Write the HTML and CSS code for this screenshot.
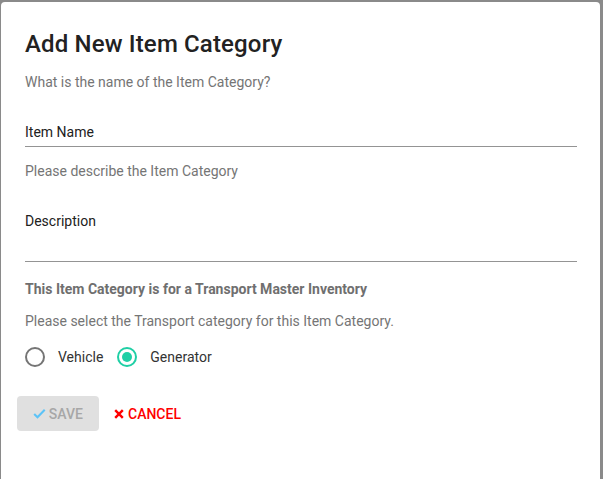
FILE: index.html
```html
<!DOCTYPE html>
<html>
<head>
<meta charset="utf-8">
<link rel="stylesheet" href="styles.css">
</head>
<body>
<div class="dialog">
  <h1 class="title">Add New Item Category</h1>
  <p class="hint hint-first">What is the name of the Item Category?</p>
  <div class="field">
    <div class="label">Item Name</div>
  </div>
  <p class="hint hint-after-field">Please describe the Item Category</p>
  <div class="field field-tall">
    <div class="label">Description</div>
  </div>
  <p class="section-title">This Item Category is for a Transport Master Inventory</p>
  <p class="hint hint-select">Please select the Transport category for this Item Category.</p>
  <div class="radios">
    <label class="radio"><span class="radio-circle"></span><span class="radio-text">Vehicle</span></label>
    <label class="radio checked"><span class="radio-circle"><span class="radio-dot"></span></span><span class="radio-text">Generator</span></label>
  </div>
  <div class="actions">
    <button class="btn btn-save">
      <svg class="icon" viewBox="0 0 16 16" width="15" height="15"><path d="M1.5 8.6 L5.6 12.6 L14.6 3.4" fill="none" stroke="#5cc3f7" stroke-width="2.6" stroke-linejoin="miter"/></svg>
      <span>SAVE</span>
    </button>
    <button class="btn btn-cancel">
      <svg class="icon" viewBox="0 0 10 10" width="10" height="10"><path d="M1.2 1.2 L8.8 8.8 M8.8 1.2 L1.2 8.8" stroke="#ff0000" stroke-width="2.4"/></svg>
      <span>CANCEL</span>
    </button>
  </div>
</div>
</body>
</html>
```
FILE: styles.css
```css
html, body {
  margin: 0;
  padding: 0;
  height: 100%;
}
body {
  background: #8a8a8a;
  font-family: Roboto, "Liberation Sans", sans-serif;
  padding: 2px 3px 0 1px;
  box-sizing: border-box;
  overflow: hidden;
}
.dialog {
  background: #fff;
  border-radius: 4px;
  height: 480px;
  box-sizing: border-box;
  padding: 26px 23px 0 24px;
}
.title {
  margin: 0;
  font-size: 24px;
  line-height: 32px;
  font-weight: 500;
  letter-spacing: 0.15px;
  color: #222;
}
.hint {
  margin: 0;
  font-size: 14px;
  line-height: 20px;
  color: #757575;
}
.hint-first { margin-top: 12px; }
.hint-after-field { margin-top: 14px; }
.hint-select { margin-top: 12px; }
.field {
  margin-top: 30px;
  padding-bottom: 4px;
  border-bottom: 1px solid #949494;
}
.field-tall {
  padding-bottom: 30px;
}
.label {
  font-size: 14px;
  line-height: 20px;
  color: #212121;
}
.section-title {
  margin: 17px 0 0;
  font-size: 14px;
  line-height: 20px;
  font-weight: 700;
  color: #6f6f6f;
}
.radios {
  margin-top: 16px;
  display: flex;
  align-items: center;
  gap: 14px;
  height: 20px;
}
.radio {
  display: flex;
  align-items: center;
  gap: 13px;
  font-size: 14px;
  line-height: 20px;
  color: #333;
}
.radio-circle {
  width: 20px;
  height: 20px;
  box-sizing: border-box;
  border: 2px solid #757575;
  border-radius: 50%;
  display: flex;
  align-items: center;
  justify-content: center;
}
.radio.checked .radio-circle {
  border-color: #1fcfa5;
}
.radio-dot {
  width: 10px;
  height: 10px;
  border-radius: 50%;
  background: #1fcfa5;
}
.actions {
  margin: 29px 0 0 -8px;
  display: flex;
  align-items: center;
  gap: 7px;
}
.btn {
  font-family: Roboto, "Liberation Sans", sans-serif;
  font-size: 14px;
  font-weight: 500;
  border: none;
  border-radius: 4px;
  height: 35px;
  display: flex;
  align-items: center;
  gap: 3px;
  cursor: pointer;
}
.btn-save {
  background: #e0e0e0;
  color: #a7a7a7;
  padding: 0 16px 0 16px;
  width: 82px;
}
.btn-cancel {
  background: transparent;
  color: #ff0000;
  padding: 0 8px;
  gap: 4px;
}
.icon {
  display: block;
}
```
